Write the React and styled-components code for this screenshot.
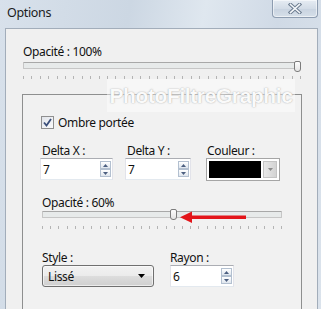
import React from 'react'
import styled, { createGlobalStyle } from 'styled-components'

const Global = createGlobalStyle`
    html, body {
        margin: 0;
        padding: 0;
        background: #d6dfe9;
        overflow: hidden;
    }
    body {
        font-family: "Noto Sans", "Open Sans", sans-serif;
        font-size: 12px;
        letter-spacing: -0.35px;
        color: #111;
    }
`

const Window = styled.div`
    position: relative;
    width: 321px;
    height: 309px;
    overflow: hidden;
    display: flex;
    flex-direction: column;
    background: linear-gradient(100deg, #d8e1eb 0%, #ccd7e3 35%, #dfe7ef 55%, #d0dae6 75%, #dbe3ec 100%);
`

const TitleBar = styled.div`
    height: 28px;
    flex: none;
    display: flex;
    align-items: flex-start;
`

const Title = styled.div`
    margin: 5px 0 0 7px;
    font-size: 12.5px;
    line-height: 16px;
    color: #1b1b1b;
`

const CloseButton = styled.div`
    margin-left: auto;
    margin-right: 3px;
    width: 46px;
    height: 18px;
    box-sizing: border-box;
    border: 1px solid #8d9cb0;
    border-top: none;
    border-radius: 0 0 4px 4px;
    background: linear-gradient(#e6ecf3, #d3dce7 50%, #c8d3e0 51%, #d6dfe9);
    box-shadow: inset 0 0 0 1px rgba(255, 255, 255, 0.55);
    display: flex;
    align-items: center;
    justify-content: center;
`

const Panel = styled.div`
    flex: 1;
    margin: 0 3px 0 5px;
    border: 1px solid #a2adba;
    border-bottom: none;
    background: #f0f0f0;
    padding: 15px 0 0 17px;
`

const Label = styled.div`
    line-height: 15px;
    height: 15px;
    padding-left: ${p => p.$indent || 0}px;
    white-space: nowrap;
`

const SliderBox = styled.div`
    position: relative;
    width: ${p => p.$width}px;
    height: ${p => p.$height}px;
    margin-top: ${p => p.$top}px;
    margin-left: ${p => p.$left || 0}px;
`

const Track = styled.div`
    position: absolute;
    left: 0;
    right: 0;
    top: 2px;
    height: 7px;
    box-sizing: border-box;
    border: 1px solid #c6c6c6;
    border-top-color: #a8a8a8;
    background: #e7eaea;
    border-radius: 1px;
`

const Thumb = styled.div`
    position: absolute;
    top: ${p => p.$top}px;
    width: 7px;
    height: 11px;
    box-sizing: border-box;
    border: 1px solid #7c7c7c;
    border-radius: 2px 2px 3px 3px;
    background: linear-gradient(#fdfdfd, #e4e4e4);
`

const Ticks = styled.div`
    position: absolute;
    left: 0;
    right: 0;
    top: ${p => p.$top}px;
    height: 3px;
    display: flex;
    justify-content: space-between;
`

const Tick = styled.span`
    width: 1px;
    height: 3px;
    background: #b4b4b4;
`

const Arrow = styled.svg`
    position: absolute;
    left: 138px;
    top: 2px;
`

const Group = styled.div`
    margin: 14px 0 0 -1px;
    width: 280px;
    height: 230px;
    box-sizing: border-box;
    border: 1px solid #8e8f8f;
    background: #f1f1f1;
    padding: 20px 0 0 17px;
`

const CheckRow = styled.label`
    display: flex;
    align-items: center;
    gap: 4px;
    height: 15px;
    margin-left: 1px;
`

const CheckBox = styled.span`
    width: 13px;
    height: 13px;
    box-sizing: border-box;
    border: 1px solid #8f8f8f;
    background: linear-gradient(135deg, #e1e4ea, #fbfbfc);
    display: flex;
    align-items: center;
    justify-content: center;
`

const DeltaGrid = styled.div`
    margin-top: 13px;
    display: grid;
    grid-template-columns: 85px 81px auto;
`

const Field = styled.div`
    width: ${p => p.$width}px;
    height: 22px;
    box-sizing: border-box;
    border: 1px solid #e2e3ea;
    border-top-color: #abadb3;
    border-bottom-color: #e3e9ef;
    background: #fff;
    display: flex;
    align-items: center;
    padding: 0 1px 0 2px;
`

const FieldText = styled.span`
    flex: 1;
    line-height: 15px;
`

const Spinner = styled.div`
    display: flex;
    flex-direction: column;
`

const SpinButton = styled.div`
    width: 11px;
    height: 8px;
    box-sizing: border-box;
    border: 1px solid #b3c0d0;
    background: linear-gradient(#ffffff, #dfe6ee);
    display: flex;
    align-items: center;
    justify-content: center;
`

const ColorCombo = styled.div`
    width: 74px;
    height: 23px;
    box-sizing: border-box;
    border: 1px solid #a5a5a5;
    background: #fff;
    padding: 2px;
    display: flex;
    gap: 2px;
`

const Swatch = styled.div`
    flex: 1;
    background: #000;
`

const DropButton = styled.div`
    width: 14px;
    box-sizing: border-box;
    border: 1px solid #c4c4c4;
    background: linear-gradient(90deg, #e8e8e8, #d3d3d3);
    display: flex;
    align-items: center;
    justify-content: center;
`

const SectionLabel = styled(Label)`
    margin-top: 14px;
`

const BottomRow = styled.div`
    margin-top: 20px;
    display: flex;
    gap: 16px;
    padding-left: 2px;
`

const Column = styled.div`
    display: flex;
    flex-direction: column;
    width: ${p => p.$width}px;
`

const Select = styled.div`
    height: 22px;
    box-sizing: border-box;
    border: 1px solid #707070;
    border-radius: 3px;
    background: linear-gradient(#f2f2f2 0%, #ebebeb 50%, #dddddd 51%, #cfcfcf 100%);
    box-shadow: inset 0 0 0 1px rgba(255, 255, 255, 0.6);
    display: flex;
    align-items: center;
    padding: 0 8px 0 5px;
    justify-content: space-between;
`

const Watermark = styled.div`
    position: absolute;
    left: 107px;
    top: 79px;
    width: 188px;
    height: 33px;
    background: rgba(255, 255, 255, 0.45);
    font-family: "Liberation Sans", Arial, sans-serif;
    font-weight: bold;
    font-size: 21px;
    line-height: 33px;
    text-align: center;
    color: #fafafa;
    text-shadow: 0 0 1px rgba(110, 110, 110, 0.5), 0 0 2px rgba(150, 150, 150, 0.35);
    letter-spacing: -0.4px;
    pointer-events: none;
`

const Up = () => (
    <svg width="5" height="3" viewBox="0 0 5 3"><path d="M2.5 0 L5 3 L0 3 Z" fill="#4c5f80" /></svg>
)
const Down = () => (
    <svg width="5" height="3" viewBox="0 0 5 3"><path d="M0 0 L5 0 L2.5 3 Z" fill="#4c5f80" /></svg>
)

const SpinField = ({ value, width }) => (
    <Field $width={width}>
        <FieldText>{value}</FieldText>
        <Spinner>
            <SpinButton><Up /></SpinButton>
            <SpinButton><Down /></SpinButton>
        </Spinner>
    </Field>
)

const Slider = ({ width, value, top, left, tickTop, ticks, height, children }) => {
    const thumbLeft = Math.round((width - 7) * value / 100)
    return (
        <SliderBox $width={width} $top={top} $left={left} $height={height}>
            <Track />
            <Thumb $top={tickTop > 16 ? 0 : 1} style={{ left: thumbLeft }} />
            <Ticks $top={tickTop}>
                {Array.from({ length: ticks }).map((_, i) => <Tick key={i} />)}
            </Ticks>
            {children}
        </SliderBox>
    )
}

export default function App() {
    return (
        <Window>
            <Global />
            <TitleBar>
                <Title>Options</Title>
                <CloseButton>
                    <svg width="14" height="11" viewBox="0 0 14 11">
                        <path d="M2.5 1.5 L11.5 9.5 M11.5 1.5 L2.5 9.5" stroke="#6c7c90" strokeWidth="3.6" strokeLinecap="square" />
                        <path d="M2.5 1.5 L11.5 9.5 M11.5 1.5 L2.5 9.5" stroke="#f4f7fa" strokeWidth="1.6" strokeLinecap="square" />
                    </svg>
                </CloseButton>
            </TitleBar>
            <Panel>
                <Label>Opacité : 100%</Label>
                <Slider width={278} value={100} top={1} tickTop={16} ticks={34} height={20} />
                <Group>
                    <CheckRow>
                        <CheckBox>
                            <svg width="9" height="9" viewBox="0 0 9 9">
                                <path d="M1 4.5 L3.5 7.5 L8 1" fill="none" stroke="#3b4f7a" strokeWidth="1.8" />
                            </svg>
                        </CheckBox>
                        Ombre portée
                    </CheckRow>
                    <DeltaGrid>
                        <Label $indent={2}>Delta X :</Label>
                        <Label $indent={2}>Delta Y :</Label>
                        <Label $indent={1}>Couleur :</Label>
                        <SpinField value="7" width={73} />
                        <SpinField value="7" width={66} />
                        <ColorCombo>
                            <Swatch />
                            <DropButton>
                                <svg width="5" height="3" viewBox="0 0 5 3"><path d="M0 0 L5 0 L2.5 3 Z" fill="#8a8a8a" /></svg>
                            </DropButton>
                        </ColorCombo>
                    </DeltaGrid>
                    <SectionLabel $indent={2}>Opacité : 60%</SectionLabel>
                    <Slider width={240} value={55} top={-1} left={2} tickTop={17} ticks={30} height={21}>
                        <Arrow width="70" height="14" viewBox="0 0 70 14">
                            <path d="M10 6.2 L66 6.2" stroke="#e3151a" strokeWidth="3.6" />
                            <path d="M0 6.2 L12 0.5 L12 12 Z" fill="#e3151a" />
                        </Arrow>
                    </Slider>
                    <BottomRow>
                        <Column $width={112}>
                            <Label>Style :</Label>
                            <Select>
                                <span>Lissé</span>
                                <svg width="7" height="4" viewBox="0 0 7 4"><path d="M0 0 L7 0 L3.5 4 Z" fill="#000" /></svg>
                            </Select>
                        </Column>
                        <Column $width={64}>
                            <Label>Rayon :</Label>
                            <SpinField value="6" width={64} />
                        </Column>
                    </BottomRow>
                </Group>
            </Panel>
            <Watermark>PhotoFiltreGraphic</Watermark>
        </Window>
    )
}
